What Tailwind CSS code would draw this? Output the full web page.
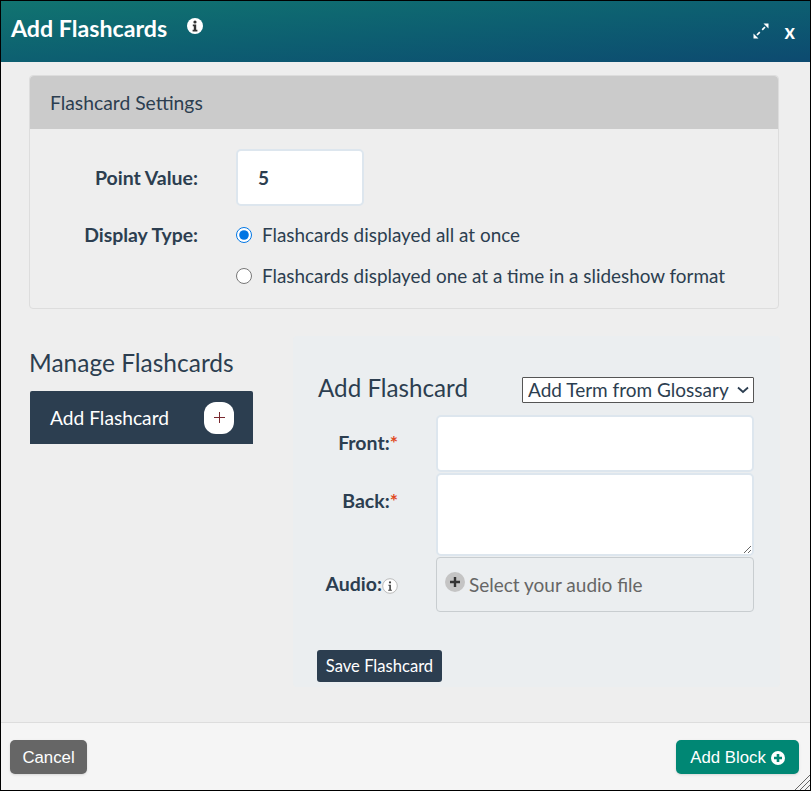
<!DOCTYPE html>
<html lang="en">
<head>
    <meta charset="UTF-8">
    <title>Add Flashcards</title>
    <script src="https://cdn.jsdelivr.net/npm/@tailwindcss/browser@4"></script>
</head>
<body class="bg-[#eeeeee] font-['Lato',sans-serif] text-[#2c3e50]">
    <div class="relative flex flex-col w-[811px] h-[791px] overflow-hidden border border-black bg-[#eeeeee]">

        <!-- header -->
        <div class="flex items-start h-[61px] shrink-0 bg-gradient-to-br from-[#117470] to-[#0d4a70] text-white">
            <h1 class="ml-[10px] mt-[11px] text-[23.2px] leading-[32px] font-bold">Add Flashcards</h1>
            <svg class="ml-[20px] mt-[17px]" width="16" height="16" viewBox="0 0 16 16"><circle cx="8" cy="8" r="8" fill="#fff"/><circle cx="8" cy="4" r="1.6" fill="#333"/><path d="M5.8 6.6h3.4v5.2h1.2v1.6H5.6v-1.6h1.2V8.2h-1z" fill="#333"/></svg>
            <svg class="ml-auto mt-[22px]" width="16" height="16" viewBox="0 0 16 16" fill="#fff"><path d="M15.5 0.5V5.5L10.5 0.5zM0.5 15.5V10.5L5.5 15.5z"/><path d="M12 4L9.2 6.8M4 12L6.8 9.2" stroke="#fff" stroke-width="1.7"/></svg>
            <span class="ml-[16px] mr-[15px] mt-[18px] text-[20px] leading-[24px] font-bold">x</span>
        </div>

        <!-- body -->
        <div class="flex-1 px-[28px] pt-[13px]">
            <div class="w-[750px] h-[234px] rounded-[4px] border border-[#dddddd] bg-[#eeeeee]">
                <div class="h-[53px] rounded-t-[4px] bg-[#cbcbcb] pl-[20px] text-[19.3px] leading-[53px]">Flashcard Settings</div>
                <div class="flex items-center mt-[20px] h-[57px]">
                    <label class="w-[168px] text-right text-[19.5px] font-bold">Point Value:</label>
                    <input type="text" value="5" class="ml-[38px] w-[128px] h-[57px] rounded-[5px] border-2 border-[#dde6ee] bg-white pl-[20px] text-[19px] font-bold outline-none">
                </div>
                <div class="flex mt-[15px]">
                    <label class="w-[168px] text-right text-[19.4px] leading-[28px] font-bold">Display Type:</label>
                    <div class="ml-[38px] text-[18.9px]">
                        <div class="flex items-center h-[28px]">
                            <input type="radio" name="display" checked class="w-[16px] h-[16px] m-0 accent-[#0075e3]">
                            <span class="ml-[10px]">Flashcards displayed all at once</span>
                        </div>
                        <div class="flex items-center h-[28px] mt-[13px]">
                            <input type="radio" name="display" class="w-[16px] h-[16px] m-0">
                            <span class="ml-[10px]">Flashcards displayed one at a time in a slideshow format</span>
                        </div>
                    </div>
                </div>
            </div>

            <div class="flex mt-[27px]">
                <div class="w-[223px] ml-[1px] pt-[12px]">
                    <h2 class="-ml-px text-[24.5px] leading-[30px] font-normal">Manage Flashcards</h2>
                    <div class="flex items-center justify-between h-[53px] mt-[13px] rounded-t-[2px] bg-[#2c3e50] pl-[20px] pr-[19px] text-white">
                        <span class="pt-[2px] text-[19.2px]">Add Flashcard</span>
                        <span class="flex items-center justify-center w-[30px] h-[32px] rounded-[12px] bg-white">
                            <svg width="11" height="11" viewBox="0 0 11 11"><path d="M5.5 0v11M0 5.5h11" stroke="#7a2a30" stroke-width="1"/></svg>
                        </span>
                    </div>
                </div>

                <div class="w-[487px] h-[351px] ml-[40px] rounded-[4px] bg-[#ebeef0] pl-[24px] pr-[26px] pt-[40px]">
                    <div class="flex items-center justify-between h-[27px]">
                        <h3 class="pb-[2px] pl-[1px] text-[24.2px] font-normal">Add Flashcard</h3>
                        <div class="relative">
                            <select class="block w-[232px] h-[26px] rounded-[1px] border border-[#555555] bg-white pl-[5px] pb-[2px] text-[19px] leading-[24px] text-[#2c3e50] outline-none appearance-none">
                                <option>Add Term from Glossary</option>
                            </select>
                            <svg class="absolute right-[4px] top-[9px] pointer-events-none" width="14" height="8" viewBox="0 0 14 8"><path d="M2 1.5L7 6L12 1.5" fill="none" stroke="#2c3e50" stroke-width="1.8"/></svg>
                        </div>
                    </div>
                    <div class="flex mt-[12px]">
                        <label class="w-[81px] pt-[14px] text-right text-[19.5px] leading-[28px] font-bold whitespace-nowrap">Front:<span class="text-[#e04a1f]">*</span></label>
                        <div class="ml-[38px] w-[318px] h-[57px] rounded-[5px] border-2 border-[#dde6ee] bg-white"></div>
                    </div>
                    <div class="flex mt-[1px]">
                        <label class="w-[81px] pt-[14px] text-right text-[19.5px] leading-[28px] font-bold whitespace-nowrap">Back:<span class="text-[#e04a1f]">*</span></label>
                        <textarea class="block ml-[38px] w-[318px] h-[83px] rounded-[5px] border-2 border-[#dde6ee] bg-white outline-none"></textarea>
                    </div>
                    <div class="flex mt-[1px]">
                        <label class="flex items-center justify-end w-[81px] h-[54px] text-[19.5px] font-bold whitespace-nowrap">Audio:<svg class="mt-[3px] shrink-0" width="16" height="16" viewBox="0 0 16 16"><circle cx="8" cy="8" r="7.3" fill="#fff" stroke="#bbbbbb"/><circle cx="8" cy="4.4" r="1.1" fill="#444"/><path d="M6.4 6.7h2.5v5h1v1H6.2v-1h1.1v-4h-.9z" fill="#444"/></svg></label>
                        <div class="flex items-start ml-[38px] w-[318px] h-[55px] rounded-[4px] border border-[#c8cdd0] bg-[#ebeef0] pl-[8px] pt-[14px] text-[19px] text-[#666666]">
                            <span class="flex items-center justify-center shrink-0 w-[20px] h-[20px] rounded-full bg-[#c4c4c4]">
                                <svg width="10" height="10" viewBox="0 0 10 10"><path d="M5 0v10M0 5h10" stroke="#333" stroke-width="2.4"/></svg>
                            </span>
                            <span class="ml-[4px] leading-[26px]">Select your audio file</span>
                        </div>
                    </div>
                    <button class="block mt-[38px] w-[125px] h-[32px] rounded-[3px] bg-[#2c3e50] text-center text-[16.6px] text-white">Save Flashcard</button>
                </div>
            </div>
        </div>

        <!-- footer -->
        <div class="flex items-start justify-between h-[68px] shrink-0 border-t border-[#dddddd] bg-[#f5f5f5] pl-[9px] pr-[11px] pt-[17px] font-['Liberation_Sans',sans-serif]">
            <button class="w-[77px] h-[34px] rounded-[5px] bg-[#666666] pt-[1px] text-[16.8px] text-white shadow-sm">Cancel</button>
            <button class="flex items-center justify-center w-[123px] h-[34px] rounded-[5px] bg-[#008774] pt-[1px] text-[16.8px] text-white shadow-sm">Add Block
                <svg class="ml-[5px]" width="14" height="14" viewBox="0 0 14 14"><circle cx="7" cy="7" r="7" fill="#fff"/><path d="M7 3v8M3 7h8" stroke="#008774" stroke-width="2.6"/></svg>
            </button>
        </div>

        <!-- window resize grip -->
        <svg class="absolute right-0 bottom-0" width="16" height="16" viewBox="0 0 16 16"><path d="M16 1L1 16M16 6L6 16M16 11L11 16" stroke="#666" stroke-width="1"/></svg>
    </div>
</body>
</html>
